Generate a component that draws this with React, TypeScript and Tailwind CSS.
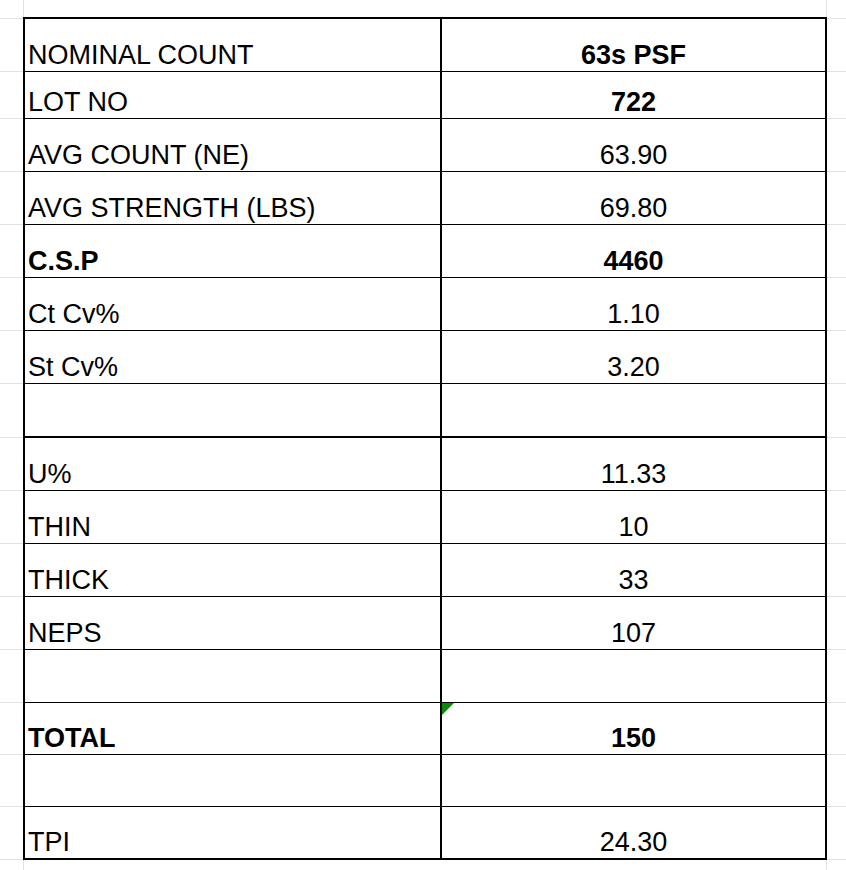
type Row = {
  label: string;
  value: string;
  h: string;
  border: string;
  boldLabel?: boolean;
  boldValue?: boolean;
  note?: boolean;
};

// heights include the bottom rule of each row
const ROWS: Row[] = [
  { label: "NOMINAL COUNT", value: "63s PSF", h: "h-[53px]", border: "border-b", boldValue: true },
  { label: "LOT NO", value: "722", h: "h-[47px]", border: "border-b", boldValue: true },
  { label: "AVG COUNT (NE)", value: "63.90", h: "h-[53px]", border: "border-b" },
  { label: "AVG STRENGTH (LBS)", value: "69.80", h: "h-[53px]", border: "border-b" },
  { label: "C.S.P", value: "4460", h: "h-[53px]", border: "border-b", boldLabel: true, boldValue: true },
  { label: "Ct Cv%", value: "1.10", h: "h-[53px]", border: "border-b" },
  { label: "St Cv%", value: "3.20", h: "h-[53px]", border: "border-b" },
  { label: "", value: "", h: "h-[54px]", border: "border-b-2" },
  { label: "U%", value: "11.33", h: "h-[53px]", border: "border-b" },
  { label: "THIN", value: "10", h: "h-[53px]", border: "border-b" },
  { label: "THICK", value: "33", h: "h-[53px]", border: "border-b" },
  { label: "NEPS", value: "107", h: "h-[53px]", border: "border-b" },
  { label: "", value: "", h: "h-[53px]", border: "border-b" },
  { label: "TOTAL", value: "150", h: "h-[52px]", border: "border-b", boldLabel: true, boldValue: true, note: true },
  { label: "", value: "", h: "h-[52px]", border: "border-b" },
  { label: "TPI", value: "24.30", h: "h-[51px]", border: "" },
];

const GUTTER = [
  "h-[19px]", "h-[53px]", "h-[47px]", "h-[53px]", "h-[53px]", "h-[53px]", "h-[53px]", "h-[53px]",
  "h-[54px]", "h-[53px]", "h-[53px]", "h-[53px]", "h-[53px]", "h-[53px]", "h-[52px]", "h-[52px]", "h-[53px]",
];

function Gutter({ w }: { w: string }) {
  return (
    <div className={`flex shrink-0 flex-col ${w}`}>
      {GUTTER.map((h, i) => (
        <div key={i} className={`${h} border-b border-[#e2e2e2]`} />
      ))}
    </div>
  );
}

export default function App() {
  return (
    <div
      className="flex h-[870px] w-[846px] overflow-hidden bg-white text-black"
      style={{ fontFamily: '"Liberation Sans", Arial, sans-serif' }}
    >
      <Gutter w="w-[23px]" />

      <div className="flex w-[804px] shrink-0 flex-col">
        <div className="h-[17px] border-x border-[#e2e2e2]" />
        <div className="flex flex-col border-2 border-black">
          {ROWS.map((r, i) => (
            <div key={i} className={`flex ${r.h} ${r.border} border-black`}>
              <div
                className={cn(
                  "flex w-[417px] shrink-0 items-end border-r-2 border-black pb-[1px] pl-[3px] text-[27px] leading-[30px]",
                  r.boldLabel && "font-bold"
                )}
              >
                {r.label}
              </div>
              <div
                className={cn(
                  "relative flex flex-1 items-end justify-center pb-[1px] text-[27px] leading-[30px]",
                  r.boldValue && "font-bold"
                )}
              >
                {r.note && (
                  <svg className="absolute left-0 top-0" width="12" height="12" viewBox="0 0 12 12">
                    <polygon points="0,0 12,0 0,12" fill="#0a8a0a" />
                  </svg>
                )}
                {r.value}
              </div>
            </div>
          ))}
        </div>
        <div className="flex-1 border-x border-[#e2e2e2]" />
      </div>

      <Gutter w="w-[19px]" />
    </div>
  );
}

function cn(...xs: (string | false | undefined)[]) {
  return xs.filter(Boolean).join(" ");
}
